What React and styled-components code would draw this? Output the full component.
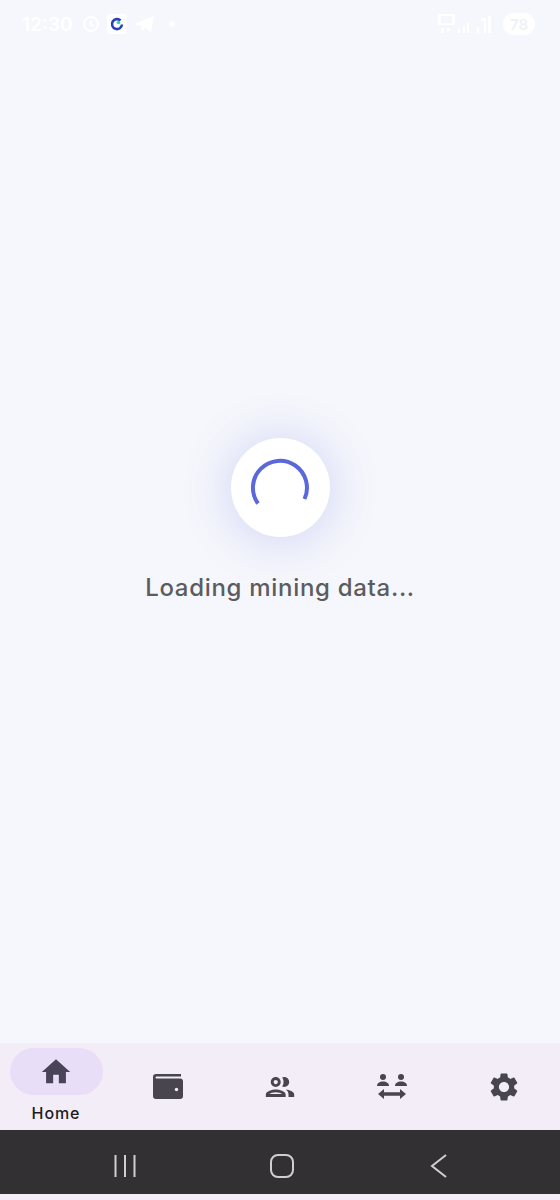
import React from "react";
import styled, { createGlobalStyle } from "styled-components";
import { MdHome, MdOutlineGroup, MdSettings } from "react-icons/md";

const GlobalStyle = createGlobalStyle`
html, body {
    margin: 0;
    padding: 0;
    background-color: #F6F7FC;
}
`;

function WalletIcon() {
    return (
        <svg viewBox="0 0 30 25" width="30" height="25" fill="currentColor">
            <path d="M3 0h25v2.500H3.500a1 1 0 0 0 0 2H27a3 3 0 0 1 3 3V22a3 3 0 0 1-3 3H3a3 3 0 0 1-3-3V3a3 3 0 0 1 3-3z" />
            <circle cx="23.500" cy="15.500" r="1.700" fill="#F3EDF7" />
        </svg>
    );
}

function TransferIcon() {
    return (
        <svg viewBox="0 0 30 26" width="30" height="26" fill="currentColor">
            <circle cx="6" cy="3" r="3" />
            <path d="M0 12c0-3 2.600-4.500 6-4.500s6 1.500 6 4.500z" />
            <circle cx="24" cy="3" r="3" />
            <path d="M18 12c0-3 2.600-4.500 6-4.500s6 1.500 6 4.500z" />
            <path d="M1 20 7 15v3.300h16V15l6 5-6 5v-3.300H7V25z" />
        </svg>
    );
}

const tabs = [
    { name: "home", label: "Home", icon: <MdHome />, active: true },
    { name: "wallet", icon: <WalletIcon /> },
    { name: "team", icon: <MdOutlineGroup /> },
    { name: "transfer", icon: <TransferIcon /> },
    { name: "settings", icon: <MdSettings /> },
];

export default function App() {
    return (
        <Screen>
            <GlobalStyle />
            <StatusBar>
                <StatusLeft>
                    <Clock>12:30</Clock>
                    <svg viewBox="0 0 18 18" width="18" height="18" fill="none" stroke="#fff" strokeWidth="1.800">
                        <circle cx="9" cy="9" r="7" />
                        <path d="M9 5v4.500l3 1.500" />
                    </svg>
                    <AppBadge>
                        <svg viewBox="0 0 20 20" width="20" height="20" fill="none">
                            <path d="M13.500 6.500a5 5 0 1 0 1.500 4" stroke="#2A3FBF" strokeWidth="2.600" />
                            <circle cx="11.500" cy="8.500" r="1.800" fill="#2FD6A0" />
                        </svg>
                    </AppBadge>
                    <svg viewBox="0 0 20 18" width="20" height="18" fill="#fff">
                        <path d="M0 9 20 1l-3 16-6-4-3 3-1-5z" />
                    </svg>
                    <Dot />
                </StatusLeft>
                <StatusRight>
                    <svg viewBox="0 0 56 22" width="56" height="22" fill="#fff">
                        <path d="M0 1h17v11H0zM3 3v7h11V3z" />
                        <path d="M3 15h3v5H3zM9 15h3v3H9zM20 16h2v4h-2zM25 13h2v7h-2zM29 10h2v10h-2zM39 14h2v6h-2zM43 5h5v15h-2V8h-3zM50 3h3v17h-3z" />
                    </svg>
                    <Battery>78</Battery>
                </StatusRight>
            </StatusBar>

            <Content>
                <LoaderCircle>
                    <svg viewBox="0 0 60 60" width="60" height="60" fill="none">
                        <path d="M8 45.500A27 27 0 1 1 54.500 41" stroke="#5A68DA" strokeWidth="4" />
                    </svg>
                </LoaderCircle>
                <LoadingText>Loading mining data...</LoadingText>
            </Content>

            <BottomNav>
                {tabs.map((tab) => (
                    <Tab key={tab.name} $active={tab.active}>
                        <IconPill $active={tab.active}>{tab.icon}</IconPill>
                        {tab.label && <TabLabel>{tab.label}</TabLabel>}
                    </Tab>
                ))}
            </BottomNav>

            <SystemBar>
                <svg viewBox="0 0 24 24" width="24" height="24" fill="none" stroke="#CFCFD2" strokeWidth="2">
                    <path d="M2.500 1v22M12 1v22M21.500 1v22" />
                </svg>
                <svg viewBox="0 0 24 24" width="24" height="24" fill="none" stroke="#CFCFD2" strokeWidth="2">
                    <rect x="1" y="1" width="22" height="22" rx="7" />
                </svg>
                <svg viewBox="0 0 24 24" width="24" height="24" fill="none" stroke="#CFCFD2" strokeWidth="2">
                    <path d="M19 1 5 12l14 11" />
                </svg>
            </SystemBar>
            <BottomStrip />
        </Screen>
    );
}

const Screen = styled.div`
width: 560px;
height: 1200px;
background-color: #F6F7FC;

display: flex;
flex-direction: column;
overflow: hidden;
`;

const StatusBar = styled.div`
height: 48px;
padding: 0 25px 0 22px;
box-sizing: border-box;
flex-shrink: 0;

display: flex;
justify-content: space-between;
align-items: center;
`;

const StatusLeft = styled.div`
display: flex;
align-items: center;
gap: 7px;
`;

const StatusRight = styled.div`
display: flex;
align-items: center;
gap: 9px;
`;

const Clock = styled.span`
font-family: "Inter", "Liberation Sans", sans-serif;
font-size: 19px;
font-weight: 600;
color: #fff;
margin-right: 2px;
`;

const AppBadge = styled.div`
width: 20px;
height: 20px;
background-color: #fff;
border-radius: 4px;
`;

const Dot = styled.div`
width: 6px;
height: 6px;
margin-left: 8px;
border-radius: 50%;
background-color: #fff;
`;

const Battery = styled.div`
width: 32px;
height: 22px;
border-radius: 11px;
background-color: #fff;

display: flex;
justify-content: center;
align-items: center;

font-family: "Inter", "Liberation Sans", sans-serif;
font-size: 15px;
font-weight: 600;
color: #F0F1F6;
`;

const Content = styled.div`
flex: 1;
padding-top: 390px;

display: flex;
flex-direction: column;
align-items: center;
`;

const LoaderCircle = styled.div`
width: 99px;
height: 99px;
border-radius: 50%;
background-color: #fff;
box-shadow: 0 2px 42px 10px rgba(90, 104, 218, 0.17);

display: flex;
justify-content: center;
align-items: center;
`;

const LoadingText = styled.p`
margin: 36px 0 0;
font-family: "Inter", "Lato", sans-serif;
font-size: 24px;
font-weight: 500;
letter-spacing: 0.7px;
color: #5C5C60;
`;

const BottomNav = styled.div`
height: 87px;
flex-shrink: 0;
background-color: #F3EDF7;

display: grid;
grid-template-columns: repeat(5, 1fr);
`;

const Tab = styled.div`
padding-top: ${(p) => (p.$active ? "5px" : "0")};

display: flex;
flex-direction: column;
align-items: center;
justify-content: ${(p) => (p.$active ? "flex-start" : "center")};
`;

const IconPill = styled.div`
width: 93px;
height: 47px;
border-radius: 24px;
background-color: ${(p) => (p.$active ? "#E8DEF8" : "transparent")};
color: ${(p) => (p.$active ? "#4A4458" : "#49454F")};
font-size: 34px;

display: flex;
justify-content: center;
align-items: center;
`;

const TabLabel = styled.span`
margin-top: 8px;
font-family: "Inter", "Roboto", sans-serif;
font-size: 16px;
font-weight: 500;
letter-spacing: 0.9px;
color: #1D1B20;
`;

const SystemBar = styled.div`
height: 64px;
flex-shrink: 0;
box-sizing: border-box;
padding: 8px 109.5px 0 112.5px;
background-color: #323033;

display: flex;
justify-content: space-between;
align-items: center;
`;

const BottomStrip = styled.div`
height: 6px;
flex-shrink: 0;
background-color: #F3EDF7;
`;
